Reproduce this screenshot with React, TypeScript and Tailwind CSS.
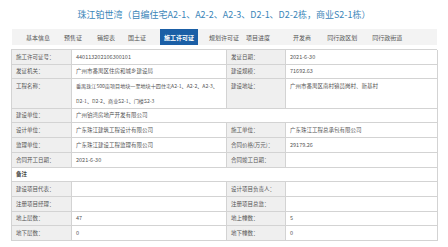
import React from 'react';

const tabs = [
  { name: '基本信息', cls: 'ml-[14px]' },
  { name: '预售证', cls: 'ml-[14px]' },
  { name: '销控表', cls: 'ml-[15px]' },
  { name: '国土证', cls: 'ml-[13px]' },
  { name: '施工许可证', cls: 'ml-[14px] px-[4px] bg-[#1b5fa6] text-white font-bold' },
  { name: '规划许可证', cls: 'ml-[11px]' },
  { name: '项目进度', cls: 'ml-[7px]' },
  { name: '开发商', cls: 'ml-[23px]' },
  { name: '同行政区划', cls: 'ml-[16px]' },
  { name: '同行政街道', cls: 'ml-[15px]' },
];

const cell = 'h-[14.7px] border-r border-b border-[#d3d3d3] flex items-center px-[4px] whitespace-nowrap overflow-hidden';
const label = `${cell} bg-[#efefef]`;
const value = `${cell} bg-white`;

const Pair = ({ l, v }: { l: string; v?: string }) => (
  <>
    <div className={label}>{l}</div>
    <div className={value}>{v}</div>
  </>
);

export default function App() {
  return (
    <div
      className="w-[448px] h-[247px] bg-white overflow-hidden text-[#555]"
      style={{ fontFamily: '"Noto Sans CJK SC", "Noto Sans", sans-serif' }}
    >
      {/* Title */}
      <div className="h-[29px] flex items-center justify-center text-[9px] text-[#3a85b8]">
        珠江铂世湾（自编住宅A2-1、A2-2、A2-3、D2-1、D2-2栋，商业S2-1栋）
      </div>

      {/* Tabs */}
      <div className="ml-[12px] w-[425px] h-[16px] bg-[#f3f3f3] flex items-stretch text-[6px]">
        {tabs.map((t) => (
          <div key={t.name} className={`flex items-center whitespace-nowrap ${t.cls}`}>
            {t.name}
          </div>
        ))}
      </div>

      {/* Table */}
      <div className="mt-[4px] ml-[11px] w-[426px] grid grid-cols-[60px_155px_59px_152px] border-l border-t border-[#d3d3d3] text-[5.5px]">
        <Pair l="施工许可证号：" v="440113202106300101" />
        <Pair l="发证日期：" v="2021-6-30" />
        <Pair l="发证机关：" v="广州市番禺区住房和城乡建设局" />
        <Pair l="建设规模：" v="71692.63" />

        <div className="h-[29.4px] border-r border-b border-[#d3d3d3] bg-[#efefef] px-[4px] leading-[14.7px]">工程名称：</div>
        <div className="h-[29.4px] border-r border-b border-[#d3d3d3] bg-white pl-[4px] leading-[14.7px] whitespace-nowrap text-[5.1px]">
          <div>番禺珠江500亩项目地块一至地块十四住宅A2-1、A2-2、A2-3、</div>
          <div>D2-1、D2-2、商业S2-1、门楼S2-3</div>
        </div>
        <div className="h-[29.4px] border-r border-b border-[#d3d3d3] bg-[#efefef] px-[4px] leading-[14.7px]">建设地址：</div>
        <div className="h-[29.4px] border-r border-b border-[#d3d3d3] bg-white px-[4px] leading-[14.7px] whitespace-nowrap overflow-hidden">
          广州市番禺区南村镇员岗村、新基村
        </div>

        <div className={label}>建设单位：</div>
        <div className={`${value} col-span-3`}>广州铂湾房地产开发有限公司</div>

        <Pair l="设计单位：" v="广东珠江建筑工程设计有限公司" />
        <Pair l="施工单位：" v="广东珠江工程总承包有限公司" />
        <Pair l="监理单位：" v="广东珠江建设工程监理有限公司" />
        <Pair l="合同价格(万元)：" v="29179.26" />
        <Pair l="合同开工日期：" v="2021-6-30" />
        <Pair l="合同竣工日期：" />

        <div className={`${value} col-span-4 font-bold text-[#444]`}>备注</div>

        <Pair l="建设项目代表：" />
        <Pair l="设计项目负责人：" />
        <Pair l="注册项目经理：" />
        <Pair l="注册项目总监：" />
        <Pair l="地上层数：" v="47" />
        <Pair l="地上幢数：" v="5" />
        <Pair l="地下层数：" v="0" />
        <Pair l="地下幢数：" v="0" />
      </div>
    </div>
  );
}
